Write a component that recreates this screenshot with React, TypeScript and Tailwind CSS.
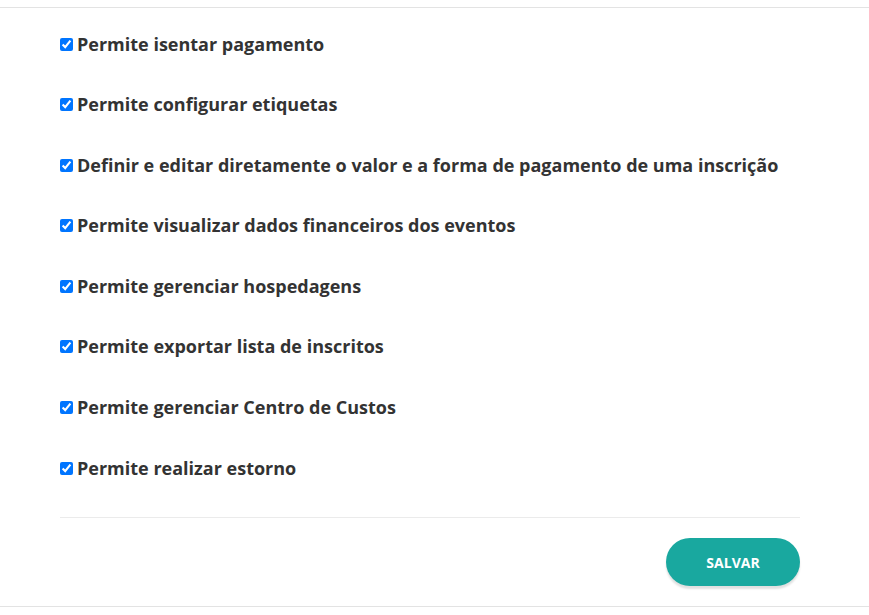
import React from "react";

const permissions = [
  "Permite isentar pagamento",
  "Permite configurar etiquetas",
  "Definir e editar diretamente o valor e a forma de pagamento de uma inscrição",
  "Permite visualizar dados financeiros dos eventos",
  "Permite gerenciar hospedagens",
  "Permite exportar lista de inscritos",
  "Permite gerenciar Centro de Custos",
  "Permite realizar estorno",
];

const App: React.FC = () => {
  return (
    <div className="min-h-screen bg-white pt-[7px] font-['Open_Sans',sans-serif]">
      <div className="border-t border-b border-[#e3e3e3] pt-[24px] pb-[20px]">
        <div className="ml-[60px] w-[740px]">
          <div className="flex flex-col gap-[36.6px]">
            {permissions.map((label) => (
              <label key={label} className="flex h-6 items-center gap-[4px] text-[18px] font-bold text-[#333333]">
                <input type="checkbox" defaultChecked className="m-0 h-[13px] w-[13px] accent-[#0075ff]" />
                <span>{label}</span>
              </label>
            ))}
          </div>
          <div className="mt-[37px] border-t border-[#ebebeb]" />
          <div className="mt-[20px] flex justify-end">
            <button className="h-[48px] w-[134px] rounded-full bg-[#19a89f] text-[14px] font-bold text-white shadow-[0_3px_2px_rgba(0,0,0,0.12)]">
              SALVAR
            </button>
          </div>
        </div>
      </div>
    </div>
  );
};

export default App;
